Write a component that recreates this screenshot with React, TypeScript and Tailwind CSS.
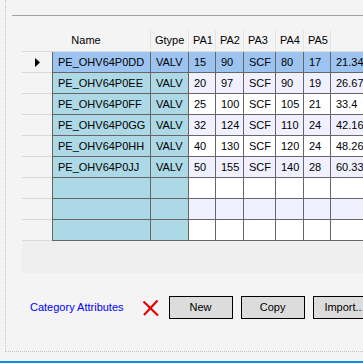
import React from "react";

type Row = string[];

const rows: Row[] = [
    ["PE_OHV64P0DD", "VALV", "15", "90", "SCF", "80", "17", "21.34"],
    ["PE_OHV64P0EE", "VALV", "20", "97", "SCF", "90", "19", "26.67"],
    ["PE_OHV64P0FF", "VALV", "25", "100", "SCF", "105", "21", "33.4"],
    ["PE_OHV64P0GG", "VALV", "32", "124", "SCF", "110", "24", "42.16"],
    ["PE_OHV64P0HH", "VALV", "40", "130", "SCF", "120", "24", "48.26"],
    ["PE_OHV64P0JJ", "VALV", "50", "155", "SCF", "140", "28", "60.33"],
    ["", "", "", "", "", "", "", ""],
    ["", "", "", "", "", "", "", ""],
    ["", "", "", "", "", "", "", ""],
];

// widths of the data columns (right border included)
const widths = ["w-[99px]", "w-[38px]", "w-[27px]", "w-[28px]", "w-[32px]", "w-[28px]", "w-[27px]", "w-[60px]"];
const headers = ["Gtype", "PA1", "PA2", "PA3", "PA4", "PA5", ""];

function RowArrow() {
    return (
        <svg width="5" height="9" viewBox="0 0 5 9">
            <polygon points="0,0 5,4.5 0,9" fill="#000" />
        </svg>
    );
}

export default function App() {
    return (
        <div
            className="flex h-[363px] w-[363px] flex-col overflow-hidden bg-[#f4f4f4] text-[11px] text-black"
            style={{ fontFamily: '"Liberation Sans", Arial, sans-serif' }}
        >
            <div className="pl-[5px]">
                <div className="flex h-[352px] flex-col border-b border-l border-dotted border-[#c4c4c4]">
                    {/* top separator */}
                    <div className="ml-[6px] mt-[15px] h-px bg-[#a0a0a0]" />

                    {/* grid */}
                    <div className="ml-[16px] mt-[14px] h-[243px] overflow-hidden bg-[#efefef]">
                        {/* header */}
                        <div className="flex h-[22px] border-b border-[#dadada] bg-[#f4f4f4] whitespace-nowrap">
                            <div className="flex w-[129px] shrink-0 items-center justify-center border-r border-[#e3e3e3]">
                                Name
                            </div>
                            {headers.map((h, i) => (
                                <div
                                    key={i}
                                    className={`${widths[i + 1]} flex shrink-0 items-center border-r border-[#e3e3e3] pl-[4px]`}
                                >
                                    {h}
                                </div>
                            ))}
                        </div>

                        {/* rows */}
                        {rows.map((r, ri) => {
                            const selected = ri === 0;
                            const alt = ri % 2 === 1;
                            const cellBg = selected ? "bg-[#9dc3f1]" : alt ? "bg-[#f0f0ff]" : "bg-white";
                            const keyBg = selected ? "bg-[#9dc3f1]" : "bg-[#add8e6]";
                            return (
                                <div key={ri} className="flex h-[21px] whitespace-nowrap">
                                    <div className="flex w-[30px] shrink-0 items-center justify-center border-b border-[#d9d9d9] bg-[#f4f4f4]">
                                        {selected && <RowArrow />}
                                    </div>
                                    {r.map((v, ci) => (
                                        <div
                                            key={ci}
                                            className={`${widths[ci]} ${ci < 2 ? keyBg : cellBg} ${
                                                ci === 0 ? "border-l" : ""
                                            } flex shrink-0 items-center border-b border-r border-[#666666] pl-[5px]`}
                                        >
                                            {v}
                                        </div>
                                    ))}
                                </div>
                            );
                        })}
                    </div>

                    {/* bottom bar */}
                    <div className="mt-[23px] flex h-[23px] items-center whitespace-nowrap">
                        <span className="ml-[24px] shrink-0 text-[#0000ff]">Category Attributes</span>
                        <svg className="ml-[18px] shrink-0" width="18" height="18" viewBox="0 0 18 18">
                            <path d="M1.5 2.5 L16 16.5" stroke="#e40000" strokeWidth="2.2" fill="none" />
                            <path d="M15.5 1.5 L2 16" stroke="#e40000" strokeWidth="2.2" fill="none" />
                        </svg>
                        <button className="ml-[9px] flex h-[23px] w-[64px] shrink-0 items-center justify-center border border-black bg-[#dcdcdc]">
                            New
                        </button>
                        <button className="ml-[8px] flex h-[23px] w-[64px] shrink-0 items-center justify-center border border-black bg-[#dcdcdc]">
                            Copy
                        </button>
                        <button className="ml-[8px] flex h-[23px] w-[64px] shrink-0 items-center justify-center border border-black bg-[#dcdcdc]">
                            Import...
                        </button>
                    </div>
                </div>
            </div>
            <div className="mt-[9px] h-[2px] bg-[#0f8de3]" />
        </div>
    );
}
